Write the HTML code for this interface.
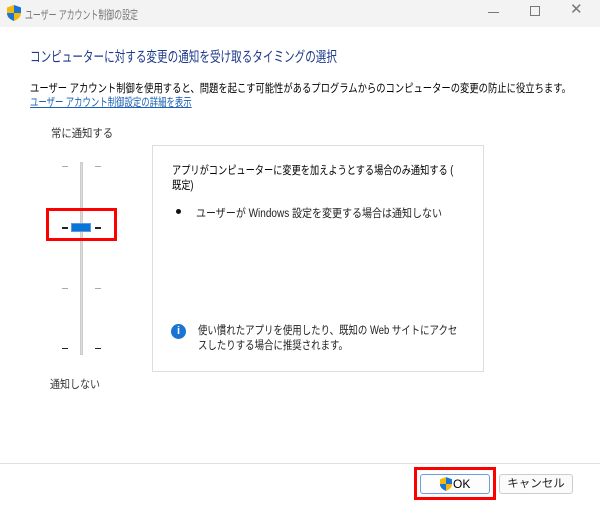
<!DOCTYPE html>
<html><head><meta charset="utf-8"><style>
*{margin:0;padding:0;box-sizing:border-box}
body{width:600px;height:506px;background:#fff;font-family:"Liberation Sans","Noto Sans CJK JP",sans-serif;position:relative;overflow:hidden;color:#000}
.a{position:absolute;white-space:nowrap;transform-origin:0 0}
</style></head><body>
<div class="a" style="left:0;top:0;width:600px;height:27px;background:#f3f3f3"></div>
<svg class="a" style="left:7px;top:5px" width="14" height="16" viewBox="0 0 14 16"><path d="M7 0L14 2.5V8C14 12 11 14.5 7 16C3 14.5 0 12 0 8V2.5Z" fill="#f2b90c"/><path d="M7 0L14 2.5V8H7Z" fill="#1a73d9"/><path d="M0 8H7V16C3 14.5 0 12 0 8Z" fill="#1a73d9"/></svg>
<div class="a" style="left:25px;top:6px;font-size:12px;color:#777;transform:scaleX(0.66)">ユーザー アカウント制御の設定</div>
<div class="a" style="left:488px;top:12px;width:11px;height:1px;background:#777"></div>
<div class="a" style="left:530px;top:6px;width:10px;height:10px;border:1px solid #777"></div>
<div class="a" style="left:570px;top:0px;font-size:15px;color:#777">✕</div>
<div class="a" style="left:30px;top:46px;font-size:14.5px;color:#1e3a8a;transform:scaleX(0.73)">コンピューターに対する変更の通知を受け取るタイミングの選択</div>
<div class="a" style="left:30px;top:80px;font-size:11.5px;transform:scaleX(0.81)">ユーザー アカウント制御を使用すると、問題を起こす可能性があるプログラムからのコンピューターの変更の防止に役立ちます。</div>
<div class="a" style="left:30px;top:94px;font-size:11.5px;color:#1a5fb4;text-decoration:underline;transform:scaleX(0.73)">ユーザー アカウント制御設定の詳細を表示</div>
<div class="a" style="left:51px;top:125px;font-size:11.5px;color:#333;transform:scaleX(0.9)">常に通知する</div>
<div class="a" style="left:50px;top:376px;font-size:11.5px;color:#333;transform:scaleX(0.87)">通知しない</div>
<div class="a" style="left:80px;top:162px;width:3px;height:193px;background:#ddd;border:1px solid #ccc"></div>
<div class="a" style="left:62px;top:166px;width:6px;height:1px;background:#aaa"></div>
<div class="a" style="left:95px;top:166px;width:6px;height:1px;background:#aaa"></div>
<div class="a" style="left:62px;top:227px;width:6px;height:2px;background:#222"></div>
<div class="a" style="left:95px;top:227px;width:6px;height:2px;background:#222"></div>
<div class="a" style="left:62px;top:288px;width:6px;height:1px;background:#aaa"></div>
<div class="a" style="left:95px;top:288px;width:6px;height:1px;background:#aaa"></div>
<div class="a" style="left:62px;top:348px;width:6px;height:1px;background:#222"></div>
<div class="a" style="left:95px;top:348px;width:6px;height:1px;background:#222"></div>
<div class="a" style="left:71px;top:223px;width:20px;height:9px;background:#0a74d8;border:1px solid #5a9ae0"></div>
<div class="a" style="left:46px;top:208px;width:71px;height:33px;border:3px solid #f00"></div>
<div class="a" style="left:152px;top:145px;width:332px;height:227px;border:1px solid #ddd"></div>
<div class="a" style="left:172px;top:164px;font-size:11.5px;line-height:15px;transform:scaleX(0.8)">アプリがコンピューターに変更を加えようとする場合のみ通知する (<br>既定)</div>
<div class="a" style="left:176px;top:209px;width:5px;height:5px;border-radius:50%;background:#111"></div>
<div class="a" style="left:196px;top:205px;font-size:11.5px;color:#222;transform:scaleX(0.87)">ユーザーが Windows 設定を変更する場合は通知しない</div>
<div class="a" style="left:171px;top:324px;width:15px;height:15px;border-radius:50%;background:#1a75d2;color:#fff;font-size:11px;font-weight:bold;text-align:center;line-height:15px">i</div>
<div class="a" style="left:198px;top:324px;font-size:11.5px;line-height:15px;color:#222;transform:scaleX(0.82)">使い慣れたアプリを使用したり、既知の Web サイトにアクセ<br>スしたりする場合に推奨されます。</div>
<div class="a" style="left:0;top:463px;width:600px;height:43px;background:#fff;border-top:1px solid #e0e0e0"></div>
<div class="a" style="left:420px;top:474px;width:70px;height:20px;border:1px solid #6a9fe0;border-radius:3px;background:#fdfdfd"></div>
<svg class="a" style="left:440px;top:477px" width="12" height="14" viewBox="0 0 14 16"><path d="M7 0L14 2.5V8C14 12 11 14.5 7 16C3 14.5 0 12 0 8V2.5Z" fill="#f2b90c"/><path d="M7 0L14 2.5V8H7Z" fill="#1a73d9"/><path d="M0 8H7V16C3 14.5 0 12 0 8Z" fill="#1a73d9"/></svg>
<div class="a" style="left:453px;top:477px;font-size:12px">OK</div>
<div class="a" style="left:414px;top:467px;width:82px;height:33px;border:3px solid #f00"></div>
<div class="a" style="left:499px;top:474px;width:74px;height:20px;border:1px solid #ccc;border-radius:3px;background:#fbfbfb;font-size:11.5px;text-align:center;line-height:18px;color:#222">キャンセル</div>
</body></html>
